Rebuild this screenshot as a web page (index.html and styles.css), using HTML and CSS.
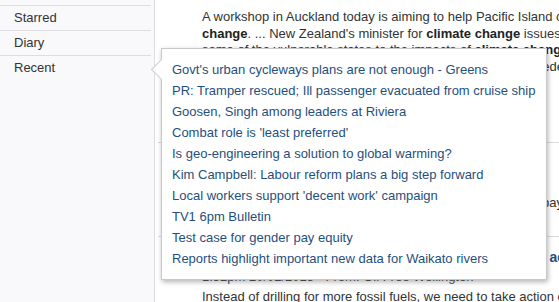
FILE: index.html
```html
<!DOCTYPE html>
<html>
<head>
    <meta charset="UTF-8">
    <title>Recent</title>
    <link rel="stylesheet" href="styles.css">
</head>
<body>
<div class="page">
    <div class="side">
        <ul class="nav">
            <li>Starred</li>
            <li>Diary</li>
            <li class="recent">Recent
                <div class="popup">
                    <span class="arrow"></span>
                    <a href="#">Govt's urban cycleways plans are not enough - Greens</a>
                    <a href="#">PR: Tramper rescued; Ill passenger evacuated from cruise ship</a>
                    <a href="#">Goosen, Singh among leaders at Riviera</a>
                    <a href="#">Combat role is 'least preferred'</a>
                    <a href="#">Is geo-engineering a solution to global warming?</a>
                    <a href="#">Kim Campbell: Labour reform plans a big step forward</a>
                    <a href="#">Local workers support 'decent work' campaign</a>
                    <a href="#">TV1 6pm Bulletin</a>
                    <a href="#">Test case for gender pay equity</a>
                    <a href="#">Reports highlight important new data for Waikato rivers</a>
                </div>
            </li>
        </ul>
    </div>
    <div class="main">
        <div class="result first">
            <p class="snippet four">A workshop in Auckland today is aiming to help Pacific Island climate
                <b>change</b>. ... New Zealand's minister for <b>climate change</b> issues said
                some of the vulnerable states to the impacts of <b>climate change</b> have
                been well supported as the workshop will look at what is needed</p>
            <p class="title">Pacific Islands help with climate change education</p>
            <p class="meta">4:10pm 20/02/2015 - From: Radio New Zealand</p>
        </div>
        <div class="result">
            <p class="title">Climate change worker rights campaign launched</p>
            <p class="meta">2:31pm 20/02/2015 - From: Council of Trade Unions</p>
            <p class="snippet two">Workers around the country are calling for better, more fair pay
                as the effects of climate change are felt on jobs and wages.</p>
        </div>
        <div class="result">
            <p class="title">Oil Free Wellington calls on the Government to take action</p>
            <p class="meta">1:52pm 20/02/2015 - From: Oil Free Wellington</p>
            <p class="snippet">Instead of drilling for more fossil fuels, we need to take action on climate change now.</p>
        </div>
    </div>
</div>
</body>
</html>
```

FILE: styles.css
```css
html, body {
    margin: 0;
    padding: 0;
    overflow: hidden;
}
body {
    font-family: "Liberation Sans", Arial, sans-serif;
    font-size: 13px;
    color: #333;
    background: #fff;
}
p {
    margin: 0;
}
.page {
    display: flex;
    height: 302px;
}
.side {
    width: 155px;
    flex: none;
    background: #f9f9fb;
    border-right: 1px solid #dcdcdf;
    padding-top: 5px;
    box-sizing: border-box;
}
.nav {
    list-style: none;
    margin: 0 3px 0 0;
    padding: 0;
}
.nav li {
    border-top: 1px solid #dedee2;
    padding-left: 14px;
    line-height: 24px;
}
.recent {
    position: relative;
}
.popup {
    position: absolute;
    left: 161px;
    top: -8px;
    width: 364px;
    padding: 10px 10px;
    background: #fff;
    border: 1px solid #c9c9c9;
    box-shadow: 1px 2px 5px rgba(0, 0, 0, 0.3);
    z-index: 5;
}
.popup a {
    display: block;
    color: #1f4f7d;
    text-decoration: none;
    line-height: 21px;
    white-space: nowrap;
}
.arrow {
    position: absolute;
    left: -8px;
    top: 13px;
    width: 14px;
    height: 14px;
    background: #fff;
    border-left: 1px solid #c9c9c9;
    border-bottom: 1px solid #c9c9c9;
    transform: rotate(45deg);
}
.main {
    flex: 1;
    overflow: hidden;
    padding-left: 3px;
}
.result {
    width: 400px;
    padding: 10px 0 8px 44px;
    border-bottom: 1px solid #dcdcdf;
}
.result.first {
    padding-top: 9px;
    padding-bottom: 10px;
}
.title {
    font-size: 14px;
    font-weight: bold;
    color: #1f4f7d;
    line-height: 20px;
    white-space: nowrap;
}
.first .title {
    margin-top: 17px;
}
.meta {
    color: #555;
    line-height: 20px;
}
.snippet {
    line-height: 16.5px;
}
.meta + .snippet {
    margin-top: 2px;
}
.snippet.four,
.snippet.two {
    display: -webkit-box;
    -webkit-box-orient: vertical;
    overflow: hidden;
}
.snippet.four {
    -webkit-line-clamp: 4;
}
.snippet.two {
    -webkit-line-clamp: 2;
}
.snippet b {
    color: #222;
}
```
